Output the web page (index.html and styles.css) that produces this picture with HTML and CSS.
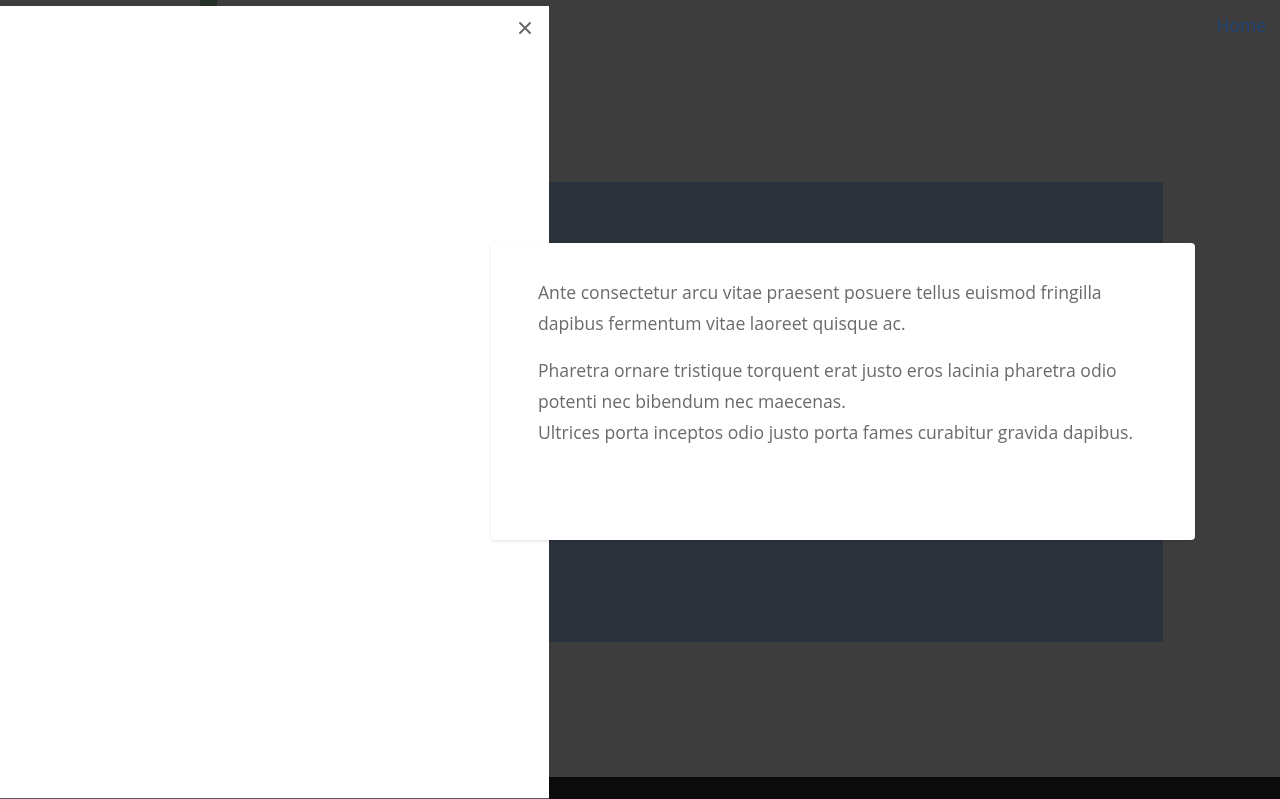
FILE: index.html
```html
<!DOCTYPE html>
<html lang="en">
<head>
    <meta charset="UTF-8">
    <meta name="viewport" content="width=device-width, initial-scale=1.0">
    <title>Home</title>
    <link rel="stylesheet" href="styles.css">
</head>
<body>

    <!-- Top bar -->
    <header class="topbar">
        <div class="logo-mark"></div>
        <nav class="nav">
            <a href="#" class="nav-link">Home</a>
        </nav>
    </header>

    <!-- Hero with text card -->
    <main class="hero">
        <div class="hero-box">
            <div class="text-card">
                <p>Ante consectetur arcu vitae praesent posuere tellus euismod fringilla dapibus fermentum vitae laoreet quisque ac.</p>
                <p>Pharetra ornare tristique torquent erat justo eros lacinia pharetra odio potenti nec bibendum nec maecenas.<br>Ultrices porta inceptos odio justo porta fames curabitur gravida dapibus.</p>
            </div>
        </div>
    </main>

    <footer class="footer"></footer>

    <!-- Sidebar (open) -->
    <div class="backdrop"></div>
    <aside class="sidebar">
        <button class="close-btn" aria-label="Close">
            <svg width="14" height="14" viewBox="0 0 14 14">
                <path d="M2 2 L12 12 M12 2 L2 12" stroke="#6b6b6b" stroke-width="2" stroke-linecap="round"/>
            </svg>
        </button>
    </aside>

</body>
</html>
```

FILE: styles.css
```css
/* Page */
body {
    margin: 0;
    background-color: #ffffff;
    font-family: 'Open Sans', 'Noto Sans', sans-serif;
    color: #6b6b6b;
    min-height: 799px;
    display: flex;
    flex-direction: column;
    overflow: hidden;
}

.topbar {
    height: 50px;
    display: flex;
    justify-content: space-between;
    align-items: center;
    padding: 0 14px 0 200px;
}

.logo-mark {
    width: 17px;
    height: 6px;
    align-self: flex-start;
    background-color: #a0c8a0;
}

.nav {
    position: relative;
    z-index: 12; /* stays above the backdrop */
}

.nav-link {
    font-family: 'Open Sans', 'Noto Sans', sans-serif;
    font-weight: 500;
    color: #1f4577;
    text-decoration: none;
    font-size: 17.5px;
}

.hero {
    flex: 1;
    padding: 132px 117px 0;
}

.hero-box {
    height: 460px;
    background-color: #b7d0fa;
    display: flex;
    justify-content: flex-end;
    align-items: flex-start;
    padding-top: 61px;
    box-sizing: border-box;
}

.text-card {
    position: relative;
    z-index: 20;
    width: 704px;
    height: 297px;
    box-sizing: border-box;
    margin-right: -32px;
    padding: 34px 47px;
    background-color: #ffffff;
    border-radius: 4px;
    box-shadow: 0 1px 3px rgba(0, 0, 0, 0.12);
    font-size: 17.6px;
    line-height: 31px;
}

.text-card p {
    margin: 0 0 16px;
}

.footer {
    height: 22px;
    background-color: #2e2e2e;
    margin-top: 135px;
}

/* Sidebar overlay */
.backdrop {
    position: fixed;
    inset: 0;
    background-color: rgba(0, 0, 0, 0.76);
    z-index: 10;
}

.sidebar {
    position: fixed;
    top: 6px;
    left: 0;
    width: 549px;
    height: 792px;
    background-color: #ffffff;
    border-bottom: 1px solid #555555;
    z-index: 15;
}

.close-btn {
    position: absolute;
    top: 15px;
    right: 17px;
    padding: 0;
    border: none;
    background: none;
    cursor: pointer;
    line-height: 0;
}
```
